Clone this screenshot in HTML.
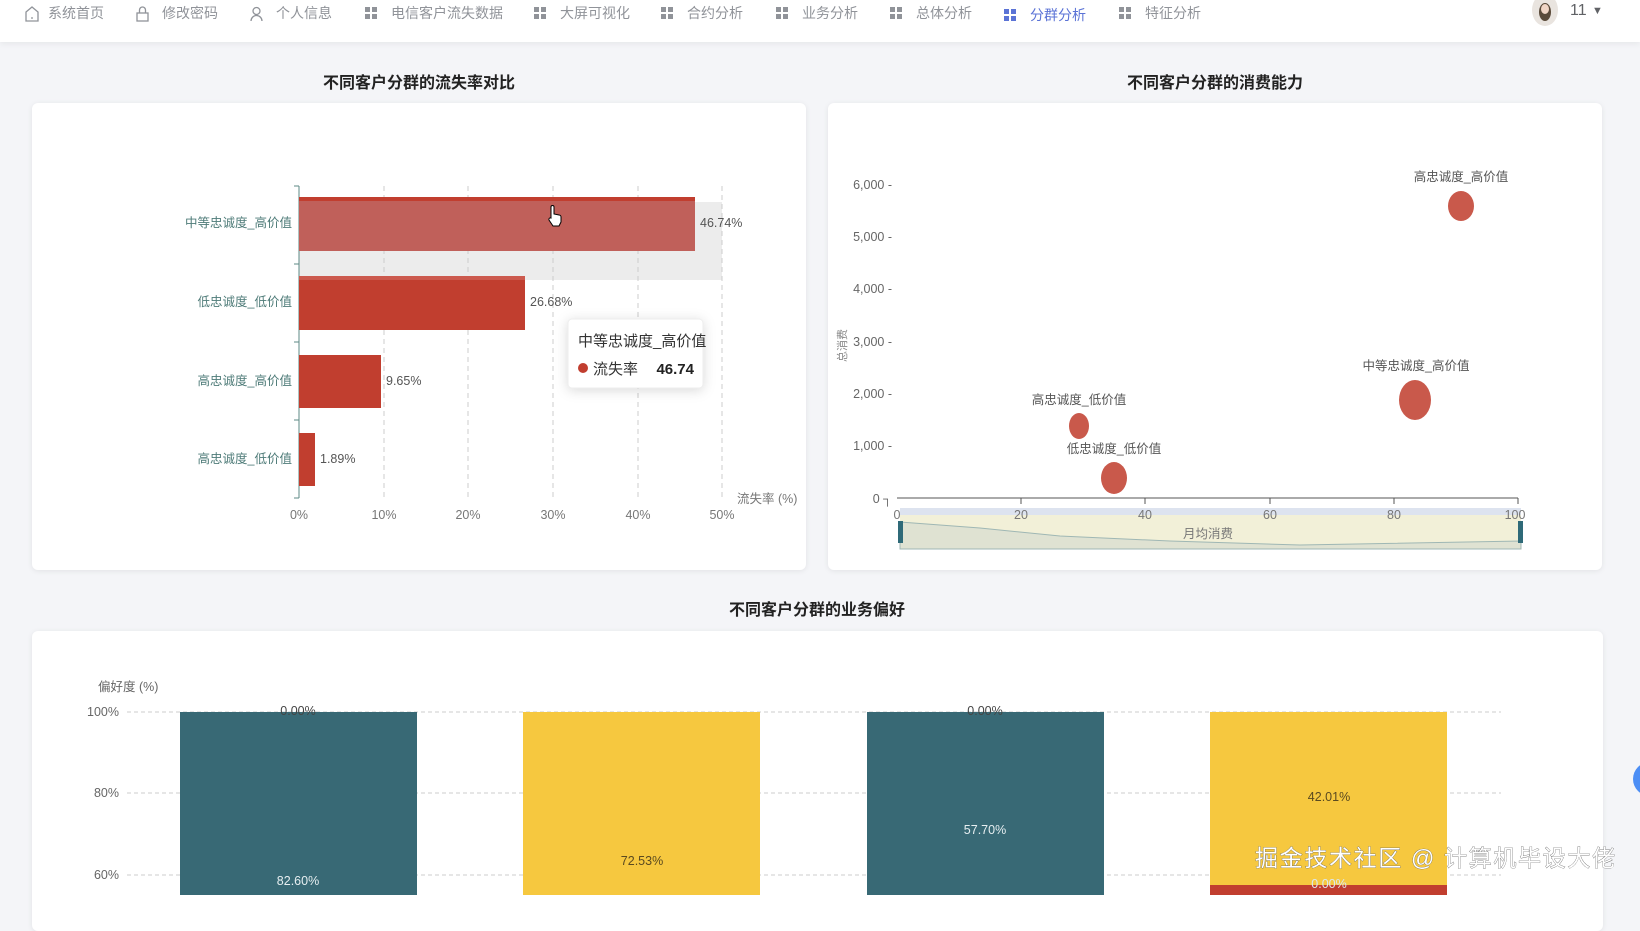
<!DOCTYPE html>
<html><head><meta charset="utf-8"><style>
*{margin:0;padding:0;box-sizing:border-box}
body{width:1640px;height:895px;overflow:hidden;background:#f4f5f8;font-family:"Liberation Sans","Noto Sans CJK SC",sans-serif;position:relative}
.hdr{position:absolute;left:0;top:0;width:1640px;height:42px;background:#fff;box-shadow:0 2px 6px rgba(0,0,0,.06)}
.nav{position:absolute;top:3px;font-size:14px;color:#909399;white-space:nowrap}
.ic{position:absolute;top:6px}
.card{position:absolute;background:#fff;border-radius:6px;box-shadow:0 1px 6px rgba(0,0,0,.08)}
.title{position:absolute;font-size:16px;font-weight:bold;color:#222;text-align:center}
svg text{font-family:"Liberation Sans","Noto Sans CJK SC",sans-serif}
</style></head><body>
<div class="hdr">
<svg class="ic" style="left:25px" width="14" height="16" viewBox="0 0 14 16"><path d="M1 6 L7 1 L13 6 V15 H1 Z M6 12 H8" fill="none" stroke="#909399" stroke-width="1.3"/></svg>
<div class="nav" style="left:48px">系统首页</div>
<svg class="ic" style="left:136px" width="13" height="16" viewBox="0 0 13 16"><rect x="1" y="7" width="11" height="8" fill="none" stroke="#909399" stroke-width="1.3"/><path d="M3.5 7 V4 A3 3 0 0 1 9.5 4 V7" fill="none" stroke="#909399" stroke-width="1.3"/></svg>
<div class="nav" style="left:162px">修改密码</div>
<svg class="ic" style="left:250px" width="13" height="16" viewBox="0 0 13 16"><circle cx="6.5" cy="5" r="3.5" fill="none" stroke="#909399" stroke-width="1.3"/><path d="M1 15 A5.5 5.5 0 0 1 12 15" fill="none" stroke="#909399" stroke-width="1.3"/></svg>
<div class="nav" style="left:276px">个人信息</div>
<svg class="ic" style="left:365px;top:7px" width="12" height="12"><rect x="0" y="0" width="5" height="5" fill="#909399"/><rect x="7" y="0" width="5" height="5" fill="#909399"/><rect x="0" y="7" width="5" height="5" fill="#909399"/><rect x="7" y="7" width="5" height="5" fill="#909399"/></svg>
<div class="nav" style="left:391px">电信客户流失数据</div>
<svg class="ic" style="left:534px;top:7px" width="12" height="12"><rect x="0" y="0" width="5" height="5" fill="#909399"/><rect x="7" y="0" width="5" height="5" fill="#909399"/><rect x="0" y="7" width="5" height="5" fill="#909399"/><rect x="7" y="7" width="5" height="5" fill="#909399"/></svg>
<div class="nav" style="left:560px">大屏可视化</div>
<svg class="ic" style="left:661px;top:7px" width="12" height="12"><rect x="0" y="0" width="5" height="5" fill="#909399"/><rect x="7" y="0" width="5" height="5" fill="#909399"/><rect x="0" y="7" width="5" height="5" fill="#909399"/><rect x="7" y="7" width="5" height="5" fill="#909399"/></svg>
<div class="nav" style="left:687px">合约分析</div>
<svg class="ic" style="left:776px;top:7px" width="12" height="12"><rect x="0" y="0" width="5" height="5" fill="#909399"/><rect x="7" y="0" width="5" height="5" fill="#909399"/><rect x="0" y="7" width="5" height="5" fill="#909399"/><rect x="7" y="7" width="5" height="5" fill="#909399"/></svg>
<div class="nav" style="left:802px">业务分析</div>
<svg class="ic" style="left:890px;top:7px" width="12" height="12"><rect x="0" y="0" width="5" height="5" fill="#909399"/><rect x="7" y="0" width="5" height="5" fill="#909399"/><rect x="0" y="7" width="5" height="5" fill="#909399"/><rect x="7" y="7" width="5" height="5" fill="#909399"/></svg>
<div class="nav" style="left:916px">总体分析</div>
<svg class="ic" style="left:1004px;top:9px" width="12" height="12"><rect x="0" y="0" width="5" height="5" fill="#5b73d6"/><rect x="7" y="0" width="5" height="5" fill="#5b73d6"/><rect x="0" y="7" width="5" height="5" fill="#5b73d6"/><rect x="7" y="7" width="5" height="5" fill="#5b73d6"/></svg>
<div class="nav" style="left:1030px;top:5px;color:#5b73d6">分群分析</div>
<svg class="ic" style="left:1119px;top:7px" width="12" height="12"><rect x="0" y="0" width="5" height="5" fill="#909399"/><rect x="7" y="0" width="5" height="5" fill="#909399"/><rect x="0" y="7" width="5" height="5" fill="#909399"/><rect x="7" y="7" width="5" height="5" fill="#909399"/></svg>
<div class="nav" style="left:1145px">特征分析</div>
<svg style="position:absolute;left:1530px;top:0" width="30" height="28"><ellipse cx="15" cy="10" rx="13" ry="16" fill="#e9e4df"/><ellipse cx="15" cy="12" rx="6" ry="9" fill="#5a4a3a"/><ellipse cx="15" cy="9" rx="4" ry="5" fill="#f0d5c5"/></svg>
<div class="nav" style="left:1570px;top:2px;color:#606266;font-size:16px">11</div>
<div class="nav" style="left:1592px;top:5px;font-size:11px;color:#606266">▼</div>
</div>

<div class="title" style="left:32px;width:774px;top:69px">不同客户分群的流失率对比</div>
<div class="title" style="left:828px;width:774px;top:69px">不同客户分群的消费能力</div>
<div class="card" style="left:32px;top:103px;width:774px;height:467px"></div>
<div class="card" style="left:828px;top:103px;width:774px;height:467px"></div>
<div class="title" style="left:32px;width:1570px;top:596px">不同客户分群的业务偏好</div>
<div class="card" style="left:32px;top:631px;width:1571px;height:300px"></div>

<svg style="position:absolute;left:0;top:0" width="1640" height="895">
<rect x="299" y="202" width="423" height="78" fill="#ececec"/>
<g stroke="#ccc" stroke-dasharray="5,4" stroke-width="1">
<line x1="384" y1="186" x2="384" y2="498"/><line x1="468" y1="186" x2="468" y2="498"/><line x1="553" y1="186" x2="553" y2="498"/><line x1="638" y1="186" x2="638" y2="498"/><line x1="722" y1="186" x2="722" y2="498"/>
</g>
<line x1="299" y1="186" x2="299" y2="498" stroke="#5e8a86" stroke-width="1"/>
<g stroke="#5e8a86"><line x1="294" y1="186" x2="299" y2="186"/><line x1="294" y1="264" x2="299" y2="264"/><line x1="294" y1="342" x2="299" y2="342"/><line x1="294" y1="420" x2="299" y2="420"/><line x1="294" y1="498" x2="299" y2="498"/></g>
<rect x="299" y="197" width="396" height="54" fill="#c0605a"/>
<rect x="299" y="197" width="396" height="4" fill="#c13e2f"/>
<rect x="299" y="276" width="226" height="54" fill="#c13e2f"/>
<rect x="299" y="276" width="226" height="4" fill="#cc5a4e"/>
<rect x="299" y="355" width="82" height="53" fill="#c13e2f"/>
<rect x="299" y="433" width="16" height="53" fill="#c13e2f"/>
<g font-size="12.5" fill="#4e7b78" text-anchor="end"><text x="292" y="227">中等忠诚度_高价值</text><text x="292" y="306">低忠诚度_低价值</text><text x="292" y="385">高忠诚度_高价值</text><text x="292" y="463">高忠诚度_低价值</text></g>
<g font-size="12.5" fill="#555"><text x="700" y="227">46.74%</text><text x="530" y="306">26.68%</text><text x="386" y="385">9.65%</text><text x="320" y="463">1.89%</text></g>
<g font-size="12.5" fill="#777" text-anchor="middle"><text x="299" y="519">0%</text><text x="384" y="519">10%</text><text x="468" y="519">20%</text><text x="553" y="519">30%</text><text x="638" y="519">40%</text><text x="722" y="519">50%</text></g>
<text x="737" y="503" font-size="12.5" fill="#777">流失率 (%)</text>
<path d="M551 215 v-8 a1.5 1.5 0 0 1 3 0 v7 l5 1 a2 2 0 0 1 2 2 v5 l-2 4 h-6 l-4 -6 a1.5 1.5 0 0 1 2 -2 z" fill="#fff" stroke="#000" stroke-width="1"/>
<g><rect x="568" y="319" width="135" height="69" rx="4" fill="#fff" stroke="#eee" style="filter:drop-shadow(0 2px 6px rgba(0,0,0,.15))"/>
<text x="578" y="346" font-size="15" fill="#333">中等忠诚度_高价值</text>
<circle cx="583" cy="368" r="5" fill="#c13e2f"/><text x="593" y="374" font-size="15" fill="#333">流失率</text>
<text x="694" y="374" font-size="15" font-weight="bold" fill="#222" text-anchor="end">46.74</text></g>

<g font-size="12.5" fill="#666" text-anchor="end"><text x="892" y="189">6,000 -</text><text x="892" y="241">5,000 -</text><text x="892" y="293">4,000 -</text><text x="892" y="346">3,000 -</text><text x="892" y="398">2,000 -</text><text x="892" y="450">1,000 -</text><text x="892" y="503">0 ┐</text></g>
<text x="0" y="0" font-size="11" fill="#888" transform="translate(846,362) rotate(-90)">总消费</text>
<line x1="897" y1="498" x2="1518" y2="498" stroke="#555"/>
<g stroke="#555"><line x1="1021" y1="498" x2="1021" y2="504"/><line x1="1145" y1="498" x2="1145" y2="504"/><line x1="1270" y1="498" x2="1270" y2="504"/><line x1="1394" y1="498" x2="1394" y2="504"/><line x1="1518" y1="498" x2="1518" y2="504"/></g>
<rect x="900" y="508" width="621" height="41" fill="#f2f0d8"/>
<rect x="900" y="508" width="621" height="7" fill="#dde3ef"/>
<path d="M900 522 L980 528 L1060 536 L1170 541 L1300 545 L1521 541 V549 H900 Z" fill="#dfe2d2" stroke="#9fb7b4"/>
<rect x="898" y="521" width="5" height="22" fill="#2f6a78"/><rect x="1518" y="521" width="5" height="22" fill="#2f6a78"/>
<g font-size="12.5" fill="#777" text-anchor="middle"><text x="897" y="519">0</text><text x="1021" y="519">20</text><text x="1145" y="519">40</text><text x="1270" y="519">60</text><text x="1394" y="519">80</text><text x="1515" y="519">100</text><text x="1208" y="538">月均消费</text></g>
<g fill="#c9594b"><ellipse cx="1461" cy="206" rx="13" ry="15"/><ellipse cx="1415" cy="400" rx="16" ry="20"/><ellipse cx="1079" cy="426" rx="10" ry="13"/><ellipse cx="1114" cy="478" rx="13" ry="16"/></g>
<g font-size="12.5" fill="#555" text-anchor="middle"><text x="1461" y="181">高忠诚度_高价值</text><text x="1416" y="370">中等忠诚度_高价值</text><text x="1079" y="404">高忠诚度_低价值</text><text x="1114" y="453">低忠诚度_低价值</text></g>

<g stroke="#ccc" stroke-dasharray="4,3"><line x1="127" y1="712" x2="1501" y2="712"/><line x1="127" y1="793" x2="1501" y2="793"/><line x1="127" y1="875" x2="1501" y2="875"/></g>
<g font-size="12.5" fill="#666" text-anchor="end"><text x="119" y="716">100%</text><text x="119" y="797">80%</text><text x="119" y="879">60%</text></g>
<text x="98" y="691" font-size="12.5" fill="#666">偏好度 (%)</text>
<rect x="180" y="712" width="237" height="190" fill="#386975"/>
<rect x="523" y="712" width="237" height="190" fill="#f6c83f"/>
<rect x="867" y="712" width="237" height="190" fill="#386975"/>
<rect x="1210" y="712" width="237" height="190" fill="#f6c83f"/>
<rect x="1210" y="885" width="237" height="20" fill="#c13e2f"/>
<g font-size="12.5" text-anchor="middle"><text x="298" y="715" fill="#444">0.00%</text><text x="298" y="885" fill="#e6eef0">82.60%</text><text x="642" y="865" fill="#5a4a20">72.53%</text><text x="985" y="715" fill="#444">0.00%</text><text x="985" y="834" fill="#e6eef0">57.70%</text><text x="1329" y="801" fill="#5a4a20">42.01%</text><text x="1329" y="888" fill="#dbe8f0">0.00%</text></g>
<text x="1255" y="866" font-size="23" fill="#fff" stroke="#555" stroke-width="0.6" style="paint-order:stroke" textLength="360">掘金技术社区 @ 计算机毕设大佬</text>
<circle cx="1650" cy="779" r="17" fill="#4c8ef5"/>
</svg>
</body></html>
